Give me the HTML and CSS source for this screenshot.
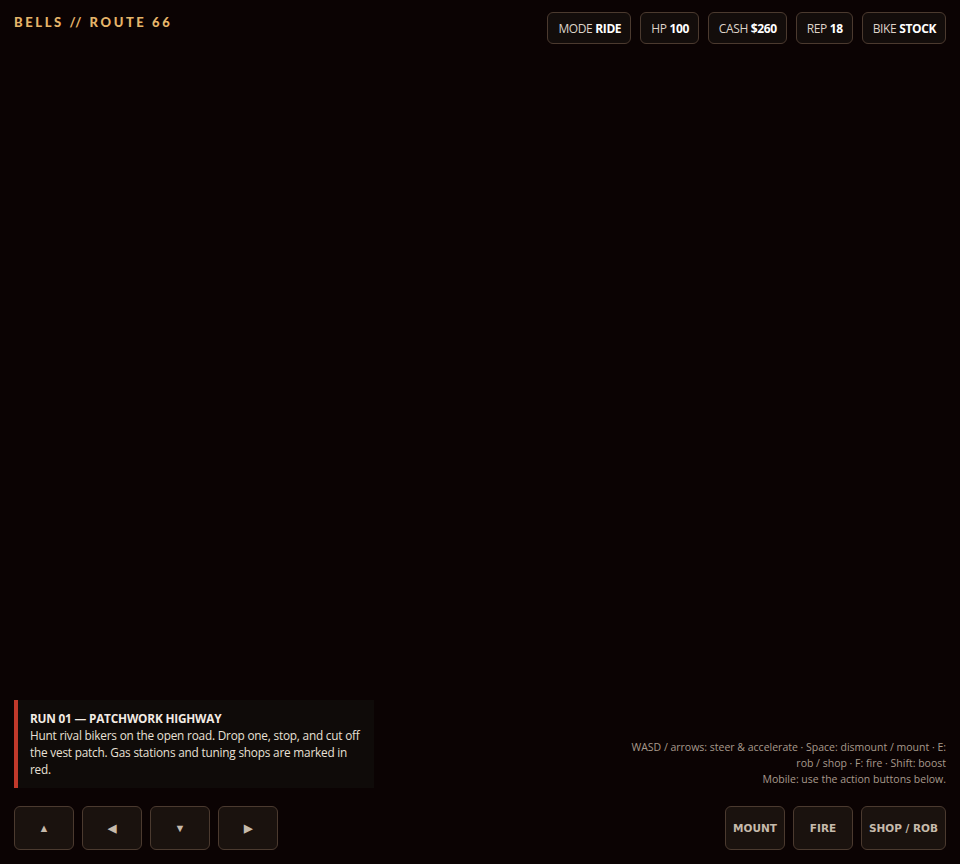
FILE: index.html
```html
<!DOCTYPE html>
<html lang="en">
<head>
    <meta charset="UTF-8">
    <meta name="viewport" content="width=device-width, initial-scale=1.0">
    <title>Bells // Route 66</title>
    <link rel="stylesheet" href="styles.css">
</head>
<body>
    <div class="hud">
        <header class="topbar">
            <div class="brand">BELLS // ROUTE 66</div>
            <div class="stats">
                <div class="stat">MODE <b id="mode">RIDE</b></div>
                <div class="stat">HP <b id="hp">100</b></div>
                <div class="stat">CASH <b id="cash">$260</b></div>
                <div class="stat">REP <b id="rep">18</b></div>
                <div class="stat">BIKE <b id="bike">STOCK</b></div>
            </div>
        </header>

        <div class="road"></div>

        <div class="info">
            <div class="mission">
                <div class="mission-title">RUN 01 — PATCHWORK HIGHWAY</div>
                <div class="mission-text">Hunt rival bikers on the open road. Drop one, stop, and cut off the vest patch. Gas stations and tuning shops are marked in red.</div>
            </div>
            <div class="help">
                WASD / arrows: steer &amp; accelerate · Space: dismount / mount · E: rob / shop · F: fire · Shift: boost<br>
                Mobile: use the action buttons below.
            </div>
        </div>

        <div class="controls">
            <div class="pad">
                <button class="btn arrow">▲</button>
                <button class="btn arrow">◀</button>
                <button class="btn arrow">▼</button>
                <button class="btn arrow">▶</button>
            </div>
            <div class="actions">
                <button class="btn">MOUNT</button>
                <button class="btn">FIRE</button>
                <button class="btn wide">SHOP / ROB</button>
            </div>
        </div>
    </div>
</body>
</html>
```

FILE: styles.css
```css
:root {
    --bg: #0b0303;
    --panel: #130d0b;
    --button-bg: #1a120e;
    --border: #4b3a2f;
    --gold: #e6b56a;
    --text: #ddd3c8;
    --muted: #a89a8c;
    --red: #c0392b;
}

* {
    box-sizing: border-box;
}

body {
    margin: 0;
    height: 100vh;
    background: var(--bg);
    color: var(--text);
    font-family: 'Open Sans', 'Noto Sans', sans-serif;
    overflow: hidden;
}

.hud {
    height: 100%;
    display: flex;
    flex-direction: column;
    padding: 12px 14px 14px;
}

.topbar {
    display: flex;
    justify-content: space-between;
    align-items: flex-start;
}

.brand {
    font-family: 'Lato', sans-serif;
    font-weight: 900;
    font-size: 13px;
    letter-spacing: 2.6px;
    color: var(--gold);
    margin-top: 2px;
}

.stats {
    display: flex;
    gap: 9px;
}

.stat {
    height: 32px;
    padding: 0 9px 0 10px;
    display: flex;
    align-items: center;
    gap: 3px;
    background: var(--panel);
    border: 1px solid var(--border);
    border-radius: 6px;
    font-size: 12px;
    letter-spacing: -0.4px;
    color: var(--text);
}

.stat b {
    color: #fff;
    font-weight: 700;
}

.road {
    flex: 1;
}

.info {
    display: flex;
    justify-content: space-between;
    align-items: flex-end;
    margin-bottom: 18px;
}

.mission {
    width: 360px;
    background: #0f0b09;
    border-left: 4px solid var(--red);
    padding: 10px 8px 10px 12px;
    font-size: 11.8px;
    line-height: 17px;
    letter-spacing: -0.2px;
    color: #e8e0d6;
}

.mission-title {
    font-weight: 700;
    color: #f3ece4;
}

.help {
    max-width: 330px;
    text-align: right;
    font-size: 10.5px;
    line-height: 16px;
    color: var(--muted);
    margin-bottom: 1px;
}

.controls {
    display: flex;
    justify-content: space-between;
}

.pad,
.actions {
    display: flex;
    gap: 8px;
}

.btn {
    width: 60px;
    height: 44px;
    padding: 0;
    background: var(--button-bg);
    border: 1px solid var(--border);
    border-radius: 6px;
    color: #c6baab;
    font-family: 'DejaVu Sans', sans-serif;
    font-weight: 700;
    font-size: 10.5px;
    cursor: pointer;
}

.btn.arrow {
    font-family: 'Liberation Sans', sans-serif;
    font-size: 11px;
}

.btn.wide {
    width: 85px;
}
```
